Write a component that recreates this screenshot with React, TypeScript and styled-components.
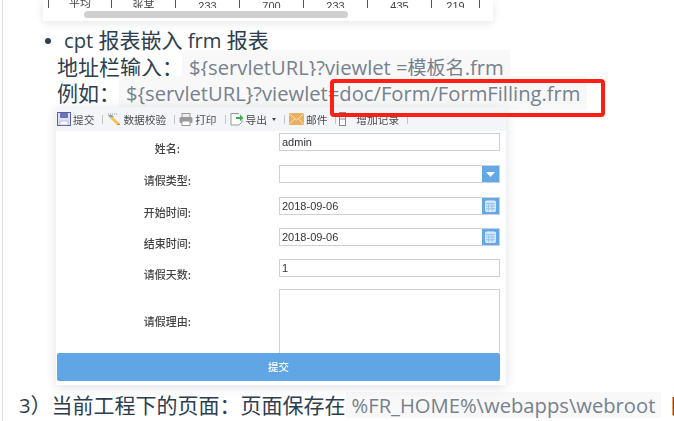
import React from 'react';
import styled, { createGlobalStyle } from 'styled-components';

const GlobalStyle = createGlobalStyle`
  html, body {
    margin: 0;
    padding: 0;
    background: #fff;
    overflow: hidden;
  }
`;

const FONT = `"Open Sans", "Noto Sans CJK SC", sans-serif`;

const Page = styled.div`
  position: relative;
  box-sizing: border-box;
  width: 674px;
  height: 421px;
  margin-left: 2px;
  border-left: 1px solid #e1e1e1;
  overflow: hidden;
  font-family: ${FONT};
  color: #2c3e50;
`;

const TableCrop = styled.div`
  box-sizing: border-box;
  width: 450px;
  height: 21px;
  margin-left: 40px;
  padding: 0 13px 3px 5px;
  background: #fff;
  box-shadow: 0 2px 8px rgba(60, 70, 90, 0.14);
  filter: blur(0.4px);
`;

const TableRow = styled.div`
  display: grid;
  grid-template-columns: 63px repeat(5, 64px) 48px;
  height: 8px;
  overflow: hidden;
  border-left: 1px solid #555;
`;

const Cell = styled.div<{ $up?: boolean }>`
  border-right: 1px solid #555;
  margin-top: ${(p) => (p.$up ? -5 : -2)}px;
  text-align: center;
  font-family: "Liberation Sans", "Noto Sans CJK SC", sans-serif;
  font-size: 11px;
  line-height: 16px;
  color: #444;
`;

const ScrollTrack = styled.div`
  margin: 3px 0 0 36px;
  width: 264px;
  height: 7px;
  border-radius: 4px;
  background: #cfcfcf;
`;

const BulletList = styled.ul`
  margin: 6px 0 0;
  padding: 0 0 0 54px;
  list-style: none;
  font-size: 21px;
  line-height: 26.5px;
`;

const BulletItem = styled.li`
  position: relative;
  &::before {
    content: '';
    position: absolute;
    left: -12px;
    top: 11px;
    width: 6px;
    height: 6px;
    border-radius: 50%;
    background: #2c3e50;
  }
`;

const BulletTitle = styled.span`
  margin-left: 7px;
`;

const Latin = styled.span`
  font-size: 20.2px;
`;

const NarrowHan = styled.span`
  font-size: 19px;
`;

const Line = styled.div`
  height: 26.5px;
  white-space: nowrap;
`;

const Code = styled.code`
  font-family: inherit;
  font-size: 20.2px;
  margin-left: -1px;
  padding: 3px 6px 3px 7px;
  background: #f8f8f8;
  color: #76818f;
`;

const FormShot = styled.div`
  box-sizing: border-box;
  width: 450px;
  height: 278px;
  margin: 0.5px 0 0 53px;
  background: #fff;
  box-shadow: 0 2px 10px rgba(60, 70, 90, 0.16);
  font-family: "Noto Sans CJK SC", sans-serif;
  filter: blur(0.3px);
`;

const Toolbar = styled.div`
  display: flex;
  align-items: center;
  height: 24px;
  padding-left: 1px;
  background: #f4f5f8;
  font-size: 10.7px;
  color: #4a4a4a;
`;

const ToolItem = styled.div`
  display: flex;
  align-items: center;
  gap: 2px;
  white-space: nowrap;
`;

const ToolSep = styled.span<{ $right?: number }>`
  width: 1px;
  height: 9px;
  margin: 0 ${(p) => p.$right ?? 4}px 0 8px;
  background: #c6c6c6;
`;

const RecordLabel = styled.span`
  margin-left: 8px;
`;

const Caret = styled.span`
  margin-left: 3px;
  border-top: 3px solid #444;
  border-left: 2.5px solid transparent;
  border-right: 2.5px solid transparent;
`;

const FormGrid = styled.div`
  display: grid;
  grid-template-columns: 223px 221px;
  grid-template-rows: 32px 32px 31px 31px 30px 64px;
  padding-top: 2px;
`;

const FieldLabel = styled.div<{ $center?: boolean }>`
  box-sizing: border-box;
  height: ${(p) => (p.$center ? 64 : 18)}px;
  display: flex;
  align-items: center;
  justify-content: center;
  padding-top: ${(p) => (p.$center ? 0 : 12)}px;
  font-size: 11px;
  font-weight: 500;
  color: #444;
`;

const Field = styled.div<{ $area?: boolean }>`
  box-sizing: border-box;
  display: flex;
  align-items: center;
  height: ${(p) => (p.$area ? 64 : 18)}px;
  border: 1px solid #cfcfdb;
  border-bottom-width: ${(p) => (p.$area ? 0 : 1)}px;
  background: #fff;
  font-family: "Liberation Sans", sans-serif;
  font-size: 11px;
  color: #333;
`;

const FieldText = styled.span`
  flex: 1;
  padding-left: 2px;
`;

const FieldAddon = styled.span`
  display: flex;
  align-items: center;
  justify-content: center;
  width: 17px;
  height: 16px;
  background: #62a8e5;
`;

const SubmitBar = styled.div`
  width: 443px;
  height: 28px;
  margin: 0 0 0 1px;
  border-radius: 2px;
  background: #60a5e4;
  color: #fff;
  font-size: 10.5px;
  font-weight: 500;
  line-height: 28px;
  text-align: center;
`;

const BottomLine = styled.div`
  display: flex;
  align-items: baseline;
  margin: 7px 0 0 16px;
  font-size: 21px;
  line-height: 26px;
  white-space: nowrap;
`;

const FlatCode = styled(Code)`
  margin-left: 0;
  padding: 0 6px;
`;

const CutMark = styled.span`
  margin-left: 8px;
  color: #8a3a3a;
`;

const Annotation = styled.div`
  position: absolute;
  left: 327px;
  top: 79px;
  box-sizing: border-box;
  width: 275px;
  height: 38px;
  border: 4px solid #ff1f14;
  border-radius: 4px;
`;

const SaveIcon = () => (
  <svg width="14" height="14" viewBox="0 0 14 14">
    <rect x="0.5" y="0.5" width="13" height="13" fill="#dfe3f3" stroke="#5a5fa8" />
    <rect x="3" y="1" width="8" height="5" fill="#6d73b8" />
    <rect x="3" y="9" width="8" height="4" fill="#fff" stroke="#8b8fc4" strokeWidth="0.5" />
  </svg>
);

const CheckIcon = () => (
  <svg width="14" height="14" viewBox="0 0 14 14">
    <path d="M1 2h9" stroke="#999" strokeWidth="1" strokeDasharray="1 1" />
    <path d="M1 3l3 0 8 8-2 2-8-8z" fill="#f3c24a" />
    <path d="M1 3h4l2 2H3z" fill="#5fa8e0" />
    <path d="M10 13l2-2 1 2z" fill="#e2603a" />
  </svg>
);

const PrintIcon = () => (
  <svg width="14" height="13" viewBox="0 0 14 13">
    <rect x="3" y="0.5" width="8" height="4" fill="#eee" stroke="#999" />
    <rect x="0.5" y="4" width="13" height="6" rx="1.5" fill="#9a9a9a" />
    <rect x="3" y="8" width="8" height="4.5" fill="#fff" stroke="#999" />
  </svg>
);

const ExportIcon = () => (
  <svg width="14" height="14" viewBox="0 0 14 14">
    <path d="M1 1.5h8M1 1v12h8l3-3V8" fill="#fff" stroke="#999" />
    <path d="M6 5h4V2.5L13.5 6 10 9V7H6z" fill="#3fae49" />
  </svg>
);

const MailIcon = () => (
  <svg width="15" height="12" viewBox="0 0 15 12">
    <rect width="15" height="12" rx="1" fill="#e8b060" />
    <path d="M0.5 1l7 6 7-6M0.5 11l5-5M14.5 11l-5-5" fill="none" stroke="#f7e2bd" />
  </svg>
);

const RecordIcon = () => (
  <svg width="7" height="14" viewBox="0 0 7 14">
    <rect x="0.5" y="0.5" width="6" height="13" fill="#fff" stroke="#888" />
    <path d="M0.5 7h6" stroke="#888" />
  </svg>
);

const DownIcon = () => (
  <svg width="9" height="5" viewBox="0 0 9 5">
    <path d="M0 0h9L4.5 5z" fill="#fff" />
  </svg>
);

const CalendarIcon = () => (
  <svg width="11" height="12" viewBox="0 0 11 12">
    <rect x="0.5" y="1" width="10" height="10.5" rx="1" fill="#cfe4f7" stroke="#e4f0fb" />
    <path d="M0.5 3.5h10M3.5 3.5v8M7 3.5v8M0.5 6h10M0.5 8.7h10" stroke="#8fc0ec" strokeWidth="0.8" />
  </svg>
);

const cells = ['平均', '张某', '233', '700', '233', '435', '219'];

const fields = [
  { label: '姓名:', value: 'admin' },
  { label: '请假类型:', value: '', addon: <DownIcon /> },
  { label: '开始时间:', value: '2018-09-06', addon: <CalendarIcon /> },
  { label: '结束时间:', value: '2018-09-06', addon: <CalendarIcon /> },
  { label: '请假天数:', value: '1' },
];

const App = () => {
  return (
    <>
      <GlobalStyle />
      <Page>
        <TableCrop>
          <TableRow>
            {cells.map((c, i) => (
              <Cell key={i} $up={i === 0}>
                {c}
              </Cell>
            ))}
          </TableRow>
          <ScrollTrack />
        </TableCrop>
        <BulletList>
          <BulletItem>
            <Line>
              <BulletTitle>
                <Latin>cpt </Latin>报表嵌入<Latin> frm </Latin>报表
              </BulletTitle>
            </Line>
            <Line>
              地址栏输入：<Code>{'${servletURL}?viewlet ='}<NarrowHan>模板名</NarrowHan>.frm</Code>
            </Line>
            <Line>
              例如：<Code>{'${servletURL}?viewlet=doc/Form/FormFilling.frm'}</Code>
            </Line>
          </BulletItem>
        </BulletList>
        <FormShot>
          <Toolbar>
            <ToolItem><SaveIcon />提交</ToolItem>
            <ToolSep />
            <ToolItem><CheckIcon />数据校验</ToolItem>
            <ToolSep />
            <ToolItem><PrintIcon />打印</ToolItem>
            <ToolSep />
            <ToolItem><ExportIcon />导出<Caret /></ToolItem>
            <ToolSep />
            <ToolItem><MailIcon />邮件</ToolItem>
            <ToolSep $right={3} />
            <ToolItem><RecordIcon /><RecordLabel>增加记录</RecordLabel></ToolItem>
            <ToolSep />
          </Toolbar>
          <FormGrid>
            {fields.map((f) => (
              <React.Fragment key={f.label}>
                <FieldLabel>{f.label}</FieldLabel>
                <Field>
                  <FieldText>{f.value}</FieldText>
                  {f.addon && <FieldAddon>{f.addon}</FieldAddon>}
                </Field>
              </React.Fragment>
            ))}
            <FieldLabel $center>请假理由:</FieldLabel>
            <Field $area />
          </FormGrid>
          <SubmitBar>提交</SubmitBar>
        </FormShot>
        <BottomLine>
          <Latin>3</Latin>）当前工程下的页面：页面保存在
          <FlatCode>%FR_HOME%\webapps\webroot</FlatCode>
          <CutMark>目</CutMark>
        </BottomLine>
        <Annotation />
      </Page>
    </>
  );
};

export default App;
